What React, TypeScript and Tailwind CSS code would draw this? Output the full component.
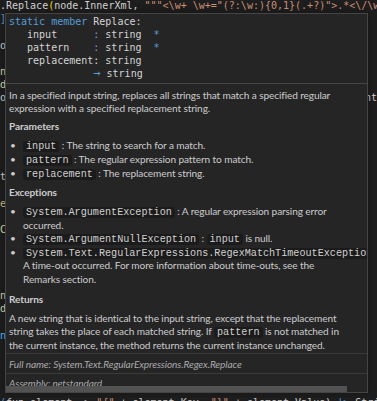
import React from 'react';

const pill = "bg-[#1b1b1b] rounded-[3px] px-[3px] font-['Liberation_Mono',monospace] text-[10.15px] tracking-normal leading-[10px] text-[#d0d0d0]";

const Code: React.FC<{ children: React.ReactNode }> = ({ children }) => <span className={pill}>{children}</span>;

const Bullet: React.FC<{ children: React.ReactNode }> = ({ children }) => (
  <li className="flex">
    <span className="w-[14px] shrink-0 pl-[1px]">•</span>
    <span className="whitespace-nowrap">{children}</span>
  </li>
);

// chars of the code lines that peek out left and right of the hover
const editorLines: [string, string, string, string][] = [
  [']', 'text-[#569cd6]', '', ''],
  ['', '', '', ''],
  ['o', 'text-[#d4d4d4]', '', ''],
  ['', '', '', ''],
  ['n', 'text-[#dcdcaa]', '', ''],
  ['d', 'text-[#dcdcaa]', '', ''],
  ['o', 'text-[#d4d4d4]', 'nt', 'text-[#d4d4d4]'],
  ['', '', '', ''],
  ['', '', '', ''],
  ['', '', '', ''],
  ['', '', '', ''],
  ['', '', '', ''],
  ['t', 'text-[#d4d4d4]', '', ''],
  ['', '', '', ''],
  ['e', 'text-[#d7ba7d]', '', ''],
  ['', '', '', ''],
  ['C', 'text-[#dcdcaa]', '', ''],
  ['', '', '', ''],
  ['', '', '', ''],
  ['', '', '', ''],
  ['', '', '', ''],
  ['n', 'text-[#dcdcaa]', '', ''],
  ['d', 'text-[#dcdcaa]', '', ''],
  ['', '', '', ''],
  ['n', 'text-[#4fc1ff]', '', ''],
  ['', '', '', ''],
  ['', '', '', ''],
  ['', '', '', ''],
  ['', '', '', ''],
];

const foot = "font-['Lato',sans-serif] text-[10.1px] tracking-[-0.11px] italic leading-[13px] text-[#a9a9a9] px-[3px] border-t border-[#3a3a3a]";

export default function App() {
  return (
    <div className="relative w-[377px] h-[401px] overflow-hidden bg-[#1e1e1e] font-['DejaVu_Sans_Mono',monospace] text-[10px] leading-[13.2px]">
      {/* editor behind the hover */}
      <div className="-mt-[1px] flex flex-col">
        <div className="whitespace-pre text-[#d4d4d4]">
          .Replace<span className="text-[#ffd700]">(</span>node.InnerXml,{' '}
          <span className="text-[#ce9178]">"""&lt;\w+ \w+="(?:\w:){'{'}0,1{'}'}(.+?)"&gt;.*&lt;\/\w+</span>
        </div>
        {editorLines.map(([l, lc, r, rc], i) => (
          <div key={i} className="flex h-[13.2px] justify-between whitespace-pre">
            <span className={lc}>{l}</span>
            <span className={rc}>{r}</span>
          </div>
        ))}
        <div className="mt-[1px] whitespace-pre text-[#d4d4d4]">
          <span className="text-[#569cd6]">(</span>fun element -&gt; <span className="text-[#ce9178]">"{'{'}"</span> + element.Key,{' '}
          <span className="text-[#ce9178]">"{'}'}"</span> + element.Value) <span className="text-[#569cd6]">|&gt;</span> String
        </div>
      </div>

      {/* hover */}
      <div className="absolute left-[5px] top-[13px] w-[363px] h-[380px] overflow-hidden border border-[#454545] bg-[#252526] shadow-[0_0_8px_rgba(0,0,0,0.36)]">
        <div className="px-[3px] pt-[1px] pb-[3px] whitespace-pre text-[10px] leading-[13px] text-[#d4d4d4]">
          <div>
            <span className="text-[#569cd6]">static</span> <span className="text-[#569cd6]">member</span> Replace:
          </div>
          <div>
            {'   input      '}<span className="text-[#7f9fc4]">:</span> string  <span className="text-[#569cd6]">*</span>
          </div>
          <div>
            {'   pattern    '}<span className="text-[#7f9fc4]">:</span> string  <span className="text-[#569cd6]">*</span>
          </div>
          <div>{'   replacement: string'}</div>
          <div>
            {'              '}<span className="text-[12px] text-[#569cd6]">→</span> string
          </div>
        </div>

        <div className="border-t border-[#454545] px-[3px] pt-[5px] font-['Lato',sans-serif] text-[10.1px] tracking-[-0.11px] leading-[13px] text-[#cccccc]">
          <p className="whitespace-nowrap">
            In a specified input string, replaces all strings that match a specified regular
            <br />
            expression with a specified replacement string.
          </p>

          <h4 className="mt-[5px] font-bold">Parameters</h4>
          <ul className="mt-[5px] leading-[14px]">
            <Bullet>
              <Code>input</Code> : The string to search for a match.
            </Bullet>
            <Bullet>
              <Code>pattern</Code> : The regular expression pattern to match.
            </Bullet>
            <Bullet>
              <Code>replacement</Code> : The replacement string.
            </Bullet>
          </ul>

          <h4 className="mt-[6px] font-bold">Exceptions</h4>
          <ul className="mt-[6px] leading-[13.6px]">
            <Bullet>
              <Code>System.ArgumentException</Code> : A regular expression parsing error
              <br />
              occurred.
            </Bullet>
            <Bullet>
              <Code>System.ArgumentNullException</Code> : <Code>input</Code> is null.
            </Bullet>
            <Bullet>
              <Code>System.Text.RegularExpressions.RegexMatchTimeoutException</Code>&nbsp;:
              <br />
              A time-out occurred. For more information about time-outs, see the
              <br />
              Remarks section.
            </Bullet>
          </ul>

          <h4 className="mt-[6px] font-bold">Returns</h4>
          <p className="mt-[6px] whitespace-nowrap leading-[13.5px]">
            A new string that is identical to the input string, except that the replacement
            <br />
            string takes the place of each matched string. If <Code>pattern</Code> is not matched in
            <br />
            the current instance, the method returns the current instance unchanged.
          </p>
        </div>

        <div className={`mt-[1px] pt-[4px] pb-[2px] ${foot}`}>Full name: System.Text.RegularExpressions.Regex.Replace</div>
        <div className={`pt-[3px] ${foot}`}>Assembly: netstandard</div>

        <div className="absolute left-0 bottom-0 w-[341px] h-[6px] bg-[#525252]" />
      </div>
    </div>
  );
}
